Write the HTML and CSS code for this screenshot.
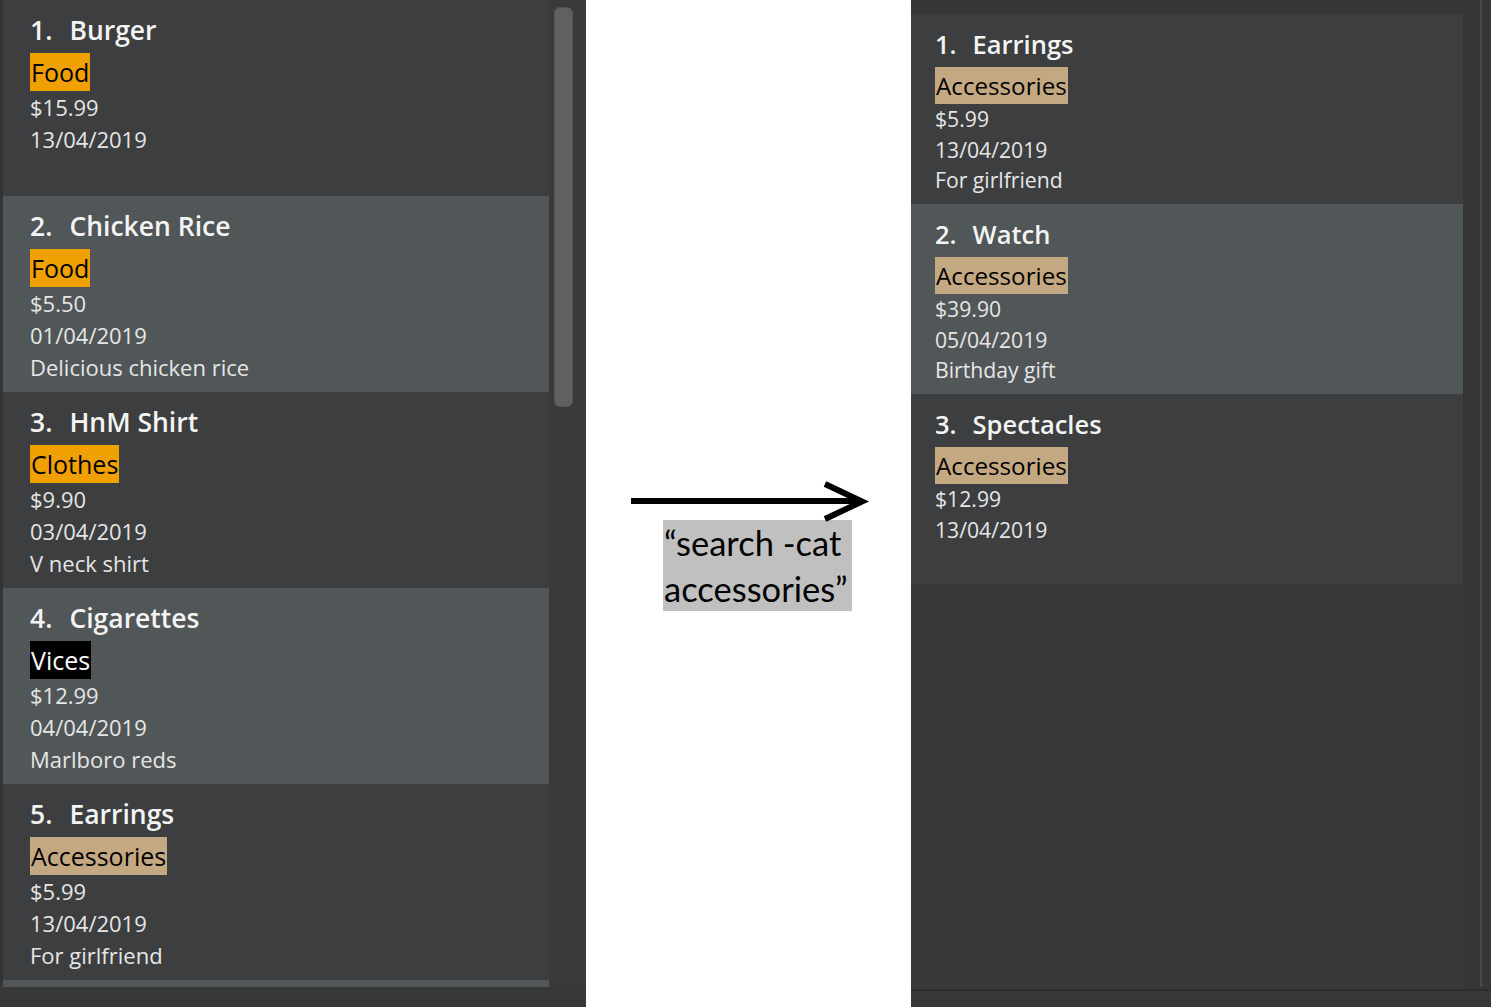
FILE: index.html
```html
<!DOCTYPE html>
<html>
<head>
<meta charset="utf-8">
<link rel="stylesheet" href="styles.css">
</head>
<body>
<div class="page">
  <section class="left-panel">
    <div class="left-edge"></div>
    <div class="list list-left">
      <div class="card even">
        <div class="title"><span class="idx">1.</span><span class="name">Burger</span></div>
        <div class="tags"><span class="tag tag-food">Food</span></div>
        <div class="line">$15.99</div>
        <div class="line">13/04/2019</div>
      </div>
      <div class="card odd">
        <div class="title"><span class="idx">2.</span><span class="name">Chicken Rice</span></div>
        <div class="tags"><span class="tag tag-food">Food</span></div>
        <div class="line">$5.50</div>
        <div class="line">01/04/2019</div>
        <div class="line">Delicious chicken rice</div>
      </div>
      <div class="card even">
        <div class="title"><span class="idx">3.</span><span class="name">HnM Shirt</span></div>
        <div class="tags"><span class="tag tag-food">Clothes</span></div>
        <div class="line">$9.90</div>
        <div class="line">03/04/2019</div>
        <div class="line">V neck shirt</div>
      </div>
      <div class="card odd">
        <div class="title"><span class="idx">4.</span><span class="name">Cigarettes</span></div>
        <div class="tags"><span class="tag tag-vices">Vices</span></div>
        <div class="line">$12.99</div>
        <div class="line">04/04/2019</div>
        <div class="line">Marlboro reds</div>
      </div>
      <div class="card even">
        <div class="title"><span class="idx">5.</span><span class="name">Earrings</span></div>
        <div class="tags"><span class="tag tag-acc">Accessories</span></div>
        <div class="line">$5.99</div>
        <div class="line">13/04/2019</div>
        <div class="line">For girlfriend</div>
      </div>
      <div class="card odd"></div>
    </div>
    <div class="scroll-track"><div class="scroll-thumb"></div></div>
  </section>

  <section class="middle">
    <svg class="arrow" width="240" height="42" viewBox="0 0 240 42">
      <line x1="0" y1="20" x2="230" y2="20" stroke="#000" stroke-width="6"/>
      <polyline points="194,3 231,20.5 194,38" fill="none" stroke="#000" stroke-width="6"/>
    </svg>
    <div class="command">“search -cat<br>accessories”</div>
  </section>

  <section class="right-panel">
    <div class="right-main">
      <div class="list list-right">
        <div class="card even">
          <div class="title"><span class="idx">1.</span><span class="name">Earrings</span></div>
          <div class="tags"><span class="tag tag-acc">Accessories</span></div>
          <div class="line">$5.99</div>
          <div class="line">13/04/2019</div>
          <div class="line">For girlfriend</div>
        </div>
        <div class="card odd">
          <div class="title"><span class="idx">2.</span><span class="name">Watch</span></div>
          <div class="tags"><span class="tag tag-acc">Accessories</span></div>
          <div class="line">$39.90</div>
          <div class="line">05/04/2019</div>
          <div class="line">Birthday gift</div>
        </div>
        <div class="card even">
          <div class="title"><span class="idx">3.</span><span class="name">Spectacles</span></div>
          <div class="tags"><span class="tag tag-acc">Accessories</span></div>
          <div class="line">$12.99</div>
          <div class="line">13/04/2019</div>
        </div>
      </div>
      <div class="right-gutter"><div class="vline"></div></div>
    </div>
    <div class="hline"></div>
  </section>
</div>
</body>
</html>
```
FILE: styles.css
```css
* { box-sizing: border-box; }
html, body { margin: 0; padding: 0; }
body {
  width: 1491px;
  height: 1007px;
  overflow: hidden;
  background: #ffffff;
  font-family: "Open Sans", "Noto Sans", sans-serif;
}
.page {
  display: flex;
  width: 1491px;
  height: 1007px;
}

/* ---------- left panel ---------- */
.left-panel {
  width: 586px;
  height: 1007px;
  background: #383838;
  display: flex;
  align-items: flex-start;
}
.left-edge {
  width: 3px;
  height: 987px;
  background: #353535;
}
.list-left {
  width: 546px;
  height: 987px;
  overflow: hidden;
}
.scroll-track {
  width: 37px;
  height: 987px;
  background: #3a3a3a;
  padding: 7px 0 0 5px;
}
.scroll-thumb {
  width: 19px;
  height: 400px;
  background: #606060;
  border: 1px solid #555555;
  border-radius: 6px;
}

/* ---------- cards ---------- */
.card {
  color: #e6e6e6;
}
.card.even { background: #3c3e3f; }
.card.odd { background: #515658; }

.list-left .card {
  height: 196px;
  padding: 11px 0 0 27px;
}
.list-right .card {
  height: 190px;
  padding: 11px 0 0 24px;
}

.title {
  display: flex;
  gap: 17px;
  font-weight: 600;
  color: #f4f4f4;
  white-space: nowrap;
}
.list-left .title { font-size: 26.5px; line-height: 38px; }
.list-right .title { font-size: 25.5px; line-height: 38px; gap: 16px; }

.tags { display: flex; }
.list-left .tags { margin-top: 4px; }
.list-right .tags { margin-top: 4px; }

.tag {
  display: inline-block;
  color: #000000;
  padding: 0 1px;
  white-space: nowrap;
}
.list-left .tag { font-size: 25px; line-height: 38px; }
.list-right .tag { font-size: 24.2px; line-height: 37px; }

.tag-food { background: #f0a000; }
.tag-acc { background: #c4a882; }
.tag-vices { background: #000000; color: #ffffff; }

.line { white-space: nowrap; }
.list-left .line { font-size: 22px; line-height: 32px; }
.list-right .line { font-size: 21.2px; line-height: 30.5px; }

/* ---------- middle ---------- */
.middle {
  width: 325px;
  height: 1007px;
  background: #ffffff;
  padding: 481px 0 0 45px;
}
.arrow { display: block; }
.command {
  margin: -3px 0 0 32px;
  width: 189px;
  background: #c0c0c0;
  color: #000000;
  font-family: Lato, "Open Sans", sans-serif;
  font-size: 34.5px;
  line-height: 45.5px;
  padding-left: 1px;
  white-space: nowrap;
  overflow: hidden;
}

/* ---------- right panel ---------- */
.right-panel {
  width: 580px;
  height: 1007px;
  background: #383838;
  display: flex;
  flex-direction: column;
}
.right-main {
  display: flex;
  height: 989px;
  background: #363636;
}
.list-right {
  width: 552px;
  margin-top: 14px;
  background: #393939;
}
.right-gutter {
  width: 28px;
  padding-left: 17px;
}
.vline {
  width: 2px;
  height: 987px;
  background: #4a4a4a;
}
.hline {
  height: 2px;
  background: #2c2c2c;
}
```
